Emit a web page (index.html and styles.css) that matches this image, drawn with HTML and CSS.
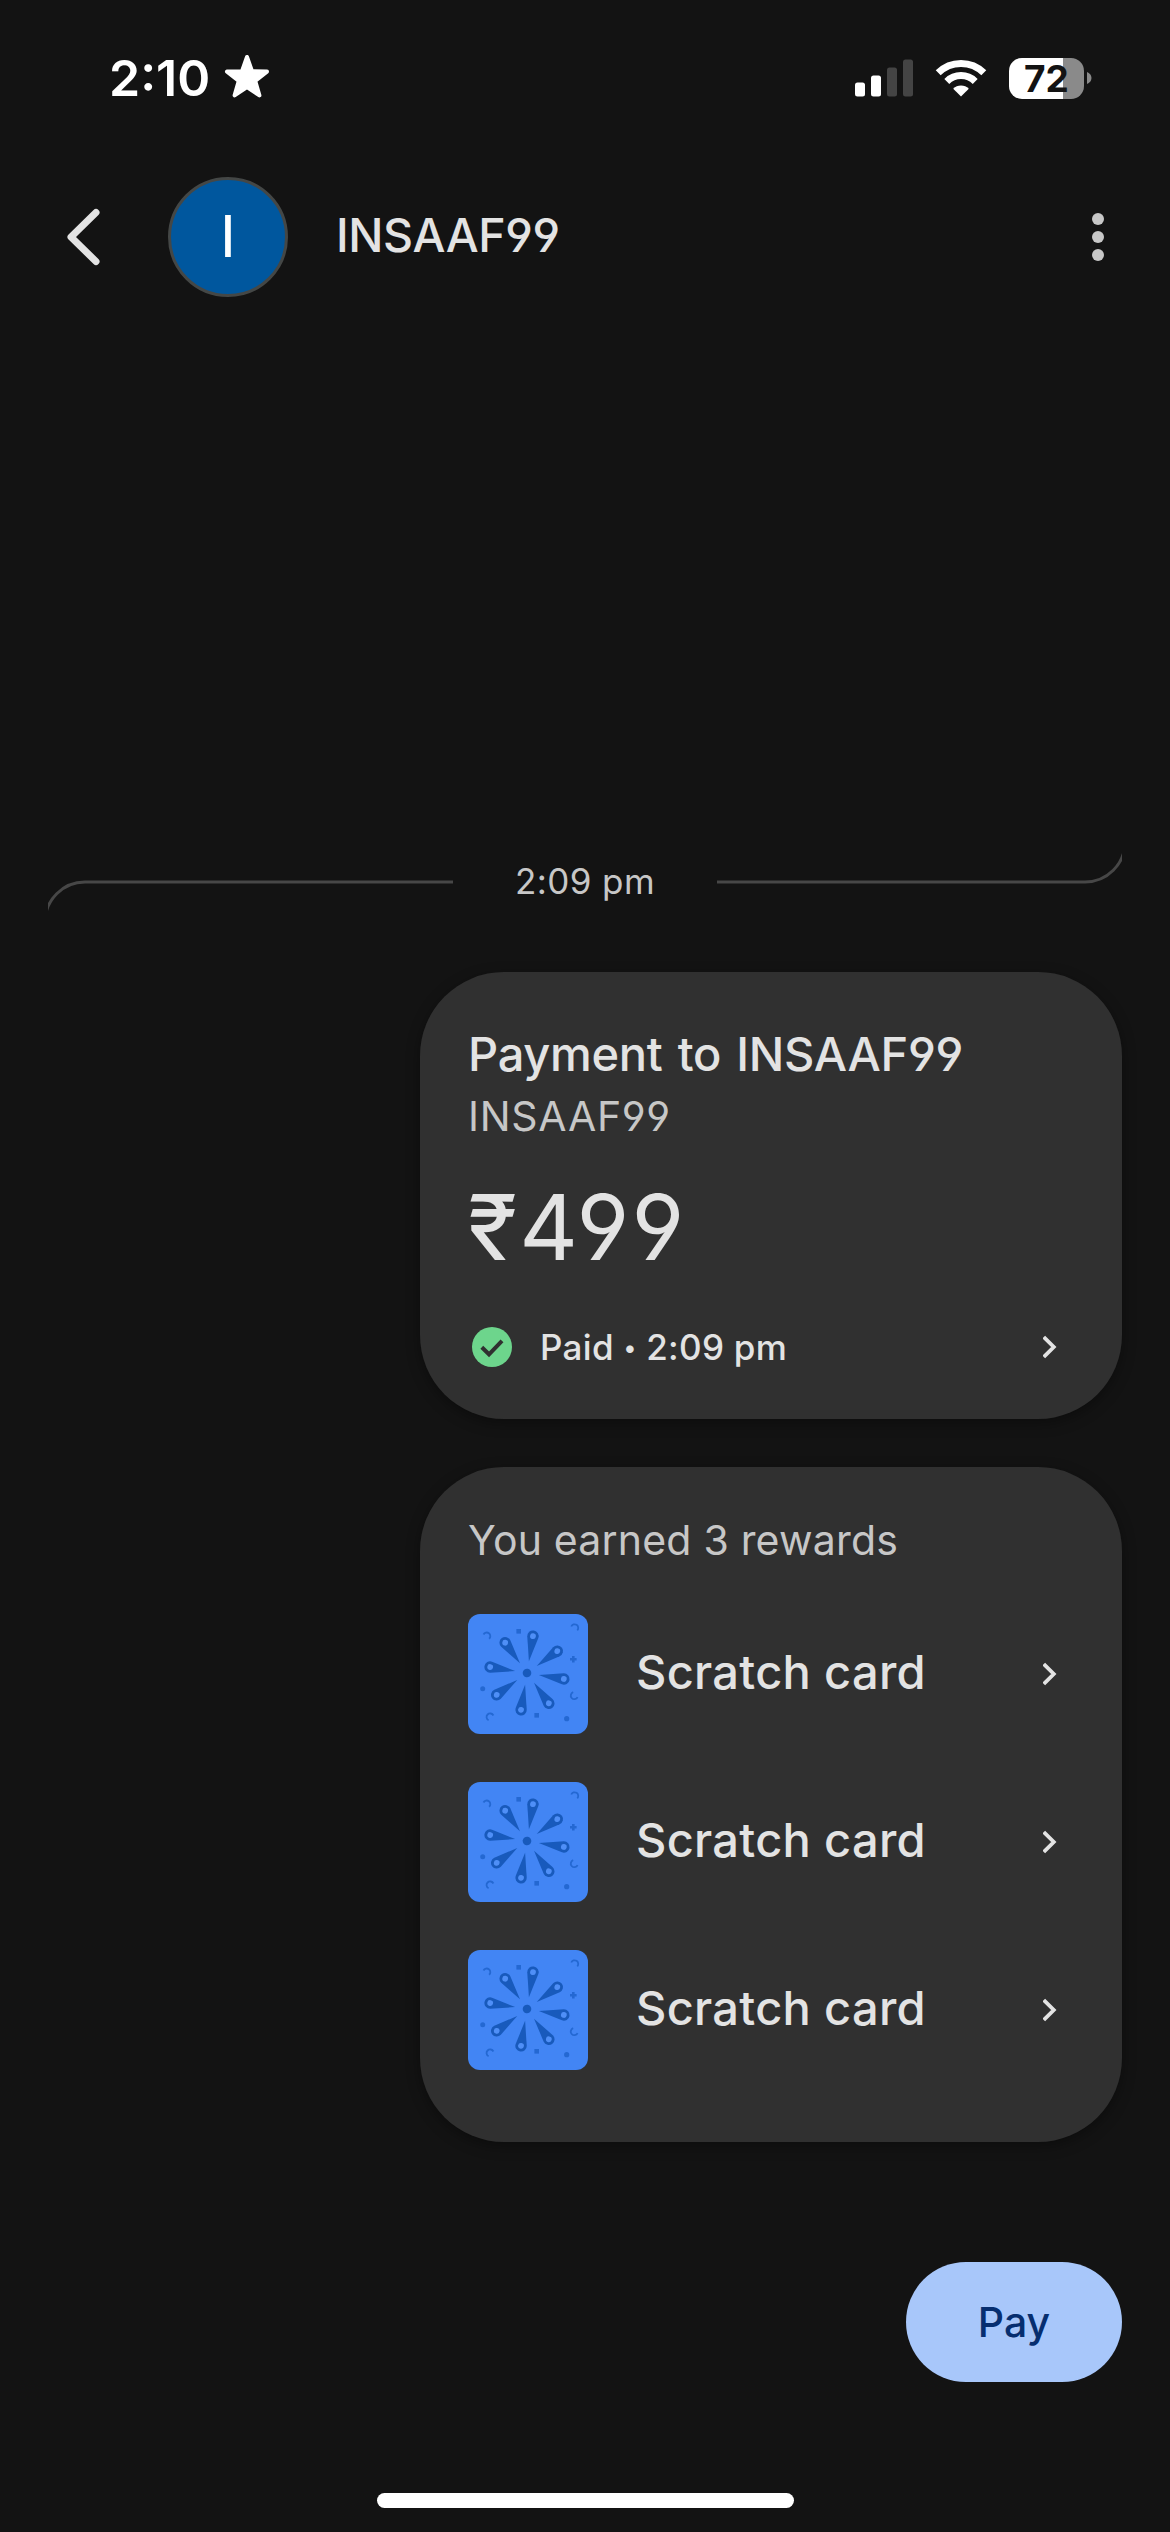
FILE: index.html
```html
<!DOCTYPE html>
<html lang="en">
<head>
<meta charset="utf-8">
<title>INSAAF99</title>
<link rel="stylesheet" href="styles.css">
</head>
<body>
<svg class="defs" width="0" height="0" aria-hidden="true">
  <defs>
    <path id="petal" d="M0-12-5.6-36.3A5.7 5.7 0 1 1 5.6-36.3Z"/>
    <symbol id="scratch" viewBox="0 0 120 120">
      <rect width="120" height="120" rx="12" fill="#4285f4"/>
      <g transform="translate(59 59) rotate(9.2)" fill="#185abc">
        <circle r="4.3"/>
        <use href="#petal"/>
        <use href="#petal" transform="rotate(45)"/>
        <use href="#petal" transform="rotate(90)"/>
        <use href="#petal" transform="rotate(135)"/>
        <use href="#petal" transform="rotate(180)"/>
        <use href="#petal" transform="rotate(225)"/>
        <use href="#petal" transform="rotate(270)"/>
        <use href="#petal" transform="rotate(315)"/>
      </g>
      <g transform="translate(59 59) rotate(9.2)" fill="#4f8ff7">
        <circle cx="0" cy="-37.3" r="2.9"/><circle cx="0" cy="37.3" r="2.9"/>
        <circle cx="37.3" cy="0" r="2.9"/><circle cx="-37.3" cy="0" r="2.9"/>
        <circle cx="26.4" cy="26.4" r="2.9"/><circle cx="-26.4" cy="26.4" r="2.9"/>
        <circle cx="26.4" cy="-26.4" r="2.9"/><circle cx="-26.4" cy="-26.4" r="2.9"/>
      </g>
      <g fill="#2468d2">
        <circle cx="14.7" cy="74.7" r="2.5"/><circle cx="98.7" cy="104.7" r="2.6"/>
        <rect x="48.4" y="15" width="4.6" height="4.6"/><rect x="66.4" y="99" width="4.6" height="4.6"/>
        <path d="M104 42h2.6v2h2v2.4h-2v2.2H104v-2.2h-2V44h2z"/>
      </g>
      <g fill="none" stroke="#2468d2" stroke-width="1.8">
        <path d="M15.5 20.5a3.6 3.6 0 1 1 5.6 4.3"/>
        <path d="M103.300 12.500a3.600 3.600 0 1 1 6 3.800"/>
        <path d="M105.200 78.200a3.600 3.600 0 1 0 4.400 5"/>
        <path d="M20.600 106.300a3.600 3.600 0 1 1 4.800-4.800"/>
      </g>
    </symbol>
    <symbol id="chevron" viewBox="0 0 16 24">
      <path d="M.8 2 10.800 12 .8 22" fill="none" stroke="#e3e3e3" stroke-width="3.800"/>
    </symbol>
  </defs>
</svg>
<div class="screen">
  <div class="status">
    <span class="clock">2:10</span>
    <svg class="star" width="46" height="46" viewBox="0 0 46 46"><path d="M23 3 28 17.2 43 17.6 31.2 26.8 35.4 41.4 23 33 10.6 41.4 14.8 26.8 3 17.6 18 17.2Z" fill="#fff" stroke="#fff" stroke-width="4" stroke-linejoin="round"/></svg>
    <svg class="signal" width="58" height="38" viewBox="0 0 58 38"><g fill="#fff"><rect y="23.500" width="10" height="14" rx="2.500"/><rect x="16" y="16.500" width="10" height="21" rx="2.500"/></g><g fill="#444"><rect x="32" y="8.500" width="10" height="29" rx="2.500"/><rect x="48" y=".5" width="10" height="37" rx="2.500"/></g></svg>
    <svg class="wifi" width="52" height="38" viewBox="0 0 52 38"><g fill="none" stroke="#fff" stroke-width="7"><path d="M3.200 13.800A32.500 32.500 0 0 1 48.800 13.800"/><path d="M11.800 22.400A20.300 20.300 0 0 1 40.200 22.400"/></g><path d="M26 37.500 18.200 29.700A11 11 0 0 1 33.800 29.700Z" fill="#fff"/></svg>
    <div class="battery"><span class="level">72</span></div>
    <svg class="nub" width="5" height="12" viewBox="0 0 5 12"><path d="M0 0C2.500 1 4.500 3 4.500 6S2.500 11 0 12Z" fill="#8a8a8a"/></svg>
  </div>
  <header class="header">
    <svg class="back" width="34" height="58" viewBox="0 0 34 58"><path d="M30 4.500 5 29 30 53.500" fill="none" stroke="#e3e3e3" stroke-width="7" stroke-linecap="round" stroke-linejoin="round"/></svg>
    <div class="avatar">I</div>
    <h1 class="name">INSAAF99</h1>
    <svg class="more" width="12" height="48" viewBox="0 0 12 48" fill="#c7c7c7"><circle cx="6" cy="6" r="6"/><circle cx="6" cy="24" r="6"/><circle cx="6" cy="42" r="6"/></svg>
  </header>
  <div class="divider">
    <svg width="405" height="64" viewBox="0 0 405 64"><path d="M-3 72A40 40 0 0 1 37 32H405" fill="none" stroke="#474747" stroke-width="3"/></svg>
    <time class="time">2:09 pm</time>
    <svg width="405" height="64" viewBox="0 0 405 64"><path d="M0 32H368A40 40 0 0 0 408 -8" fill="none" stroke="#474747" stroke-width="3"/></svg>
  </div>
  <main class="thread">
    <section class="card payment">
      <h2 class="title">Payment to INSAAF99</h2>
      <p class="payee">INSAAF99</p>
      <p class="amount">₹499</p>
      <div class="paid">
        <svg width="40" height="40" viewBox="0 0 40 40"><circle cx="20" cy="20" r="20" fill="#6dd58c"/><path d="M9.800 20.300 17 27.300 30 13.800" fill="none" stroke="#303030" stroke-width="4"/></svg>
        <span class="state">Paid <span class="dot">•</span> 2:09 pm</span>
        <svg class="go" width="16" height="24"><use href="#chevron"/></svg>
      </div>
    </section>
    <section class="card rewards">
      <p class="earned">You earned 3 rewards</p>
      <div class="reward"><svg width="120" height="120"><use href="#scratch"/></svg><span class="label">Scratch card</span><svg class="go" width="16" height="24"><use href="#chevron"/></svg></div>
      <div class="reward"><svg width="120" height="120"><use href="#scratch"/></svg><span class="label">Scratch card</span><svg class="go" width="16" height="24"><use href="#chevron"/></svg></div>
      <div class="reward"><svg width="120" height="120"><use href="#scratch"/></svg><span class="label">Scratch card</span><svg class="go" width="16" height="24"><use href="#chevron"/></svg></div>
    </section>
    <button class="pay">Pay</button>
  </main>
  <div class="home"></div>
</div>
</body>
</html>
```
FILE: styles.css
```css
* { box-sizing: border-box; margin: 0; padding: 0; }
body { background: #131313; color: #e3e3e3; font-family: Inter, "Noto Sans", sans-serif; }
svg { display: block; flex: none; }
.defs { position: absolute; }
.screen { width: 1170px; height: 2532px; display: flex; flex-direction: column; overflow: hidden; }
.status { height: 132px; padding: 24px 78px 0 109px; display: flex; align-items: center; color: #fff; }
.clock { width: 115px; font-size: 50px; font-weight: 600; line-height: 60px; white-space: nowrap; }
.star { margin-bottom: 3px; }
.signal { margin-left: auto; }
.wifi { margin: 0 22px 0 22px; }
.battery { width: 75px; height: 41px; border-radius: 13px; background: linear-gradient(90deg, #fff 54px, #8a8a8a 54px); color: #131313; display: flex; align-items: center; justify-content: center; margin-right: 3px; }
.level { font-size: 37px; font-weight: 700; line-height: 41px; }
.header { height: 210px; padding: 0 66px 0 66px; display: flex; align-items: center; }
.avatar { width: 120px; height: 120px; margin: 0 48px 0 68px; border: 3px solid #444746; border-radius: 50%; background: #00579e; color: #fff; font: 60px/114px Roboto, sans-serif; text-align: center; }
.name { font-size: 46.5px; font-weight: 480; line-height: 60px; letter-spacing: -.4px; margin-top: -4px; }
.more { margin-left: auto; }
.divider { height: 64px; margin: 508px 48px 58px; display: flex; justify-content: space-between; align-items: center; }
.time { font-size: 35px; line-height: 42px; letter-spacing: .4px; color: #c7c7c7; margin-top: -3px; }
.thread { display: flex; flex-direction: column; align-items: flex-end; padding: 0 48px; }
.card { width: 702px; border-radius: 84px; background: #303030; margin-bottom: 48px; padding: 0 48px; box-shadow: 0 4px 14px rgba(0, 0, 0, .35); }
.payment { height: 447px; padding-top: 52px; }
.title { font-size: 47px; font-weight: 480; line-height: 60px; letter-spacing: -.3px; word-spacing: 3px; }
.payee { font-size: 41px; line-height: 65px; letter-spacing: .7px; color: #c7c7c7; }
.amount { font-size: 91px; line-height: 156px; letter-spacing: 2px; }
.paid { height: 84px; padding: 0 15px 0 4px; display: flex; align-items: center; }
.state { margin-left: 28px; font-size: 35px; font-weight: 480; line-height: 42px; letter-spacing: .3px; margin-top: -1px; }
.dot { font-size: 24px; vertical-align: 4px; line-height: 1; }
.go { margin-left: auto; }
.rewards { height: 675px; padding-top: 43px; display: flex; flex-direction: column; gap: 48px; }
.earned { font-size: 41px; line-height: 60px; letter-spacing: .2px; margin-bottom: -4px; color: #c7c7c7; }
.reward { height: 120px; padding-right: 15px; display: flex; align-items: center; }
.label { margin-left: 48px; font-size: 47px; font-weight: 480; line-height: 60px; letter-spacing: .3px; margin-top: -4px; }
.pay { width: 216px; height: 120px; margin-top: 72px; border: 0; border-radius: 60px; background: #a8c7fa; color: #062e6f; font: 480 41px/60px Inter, sans-serif; }
.home { width: 417px; height: 15px; margin: 111px auto 0; border-radius: 8px; background: #fff; }
.name, .title, .payee, .amount { font-feature-settings: "cv04"; }
```
